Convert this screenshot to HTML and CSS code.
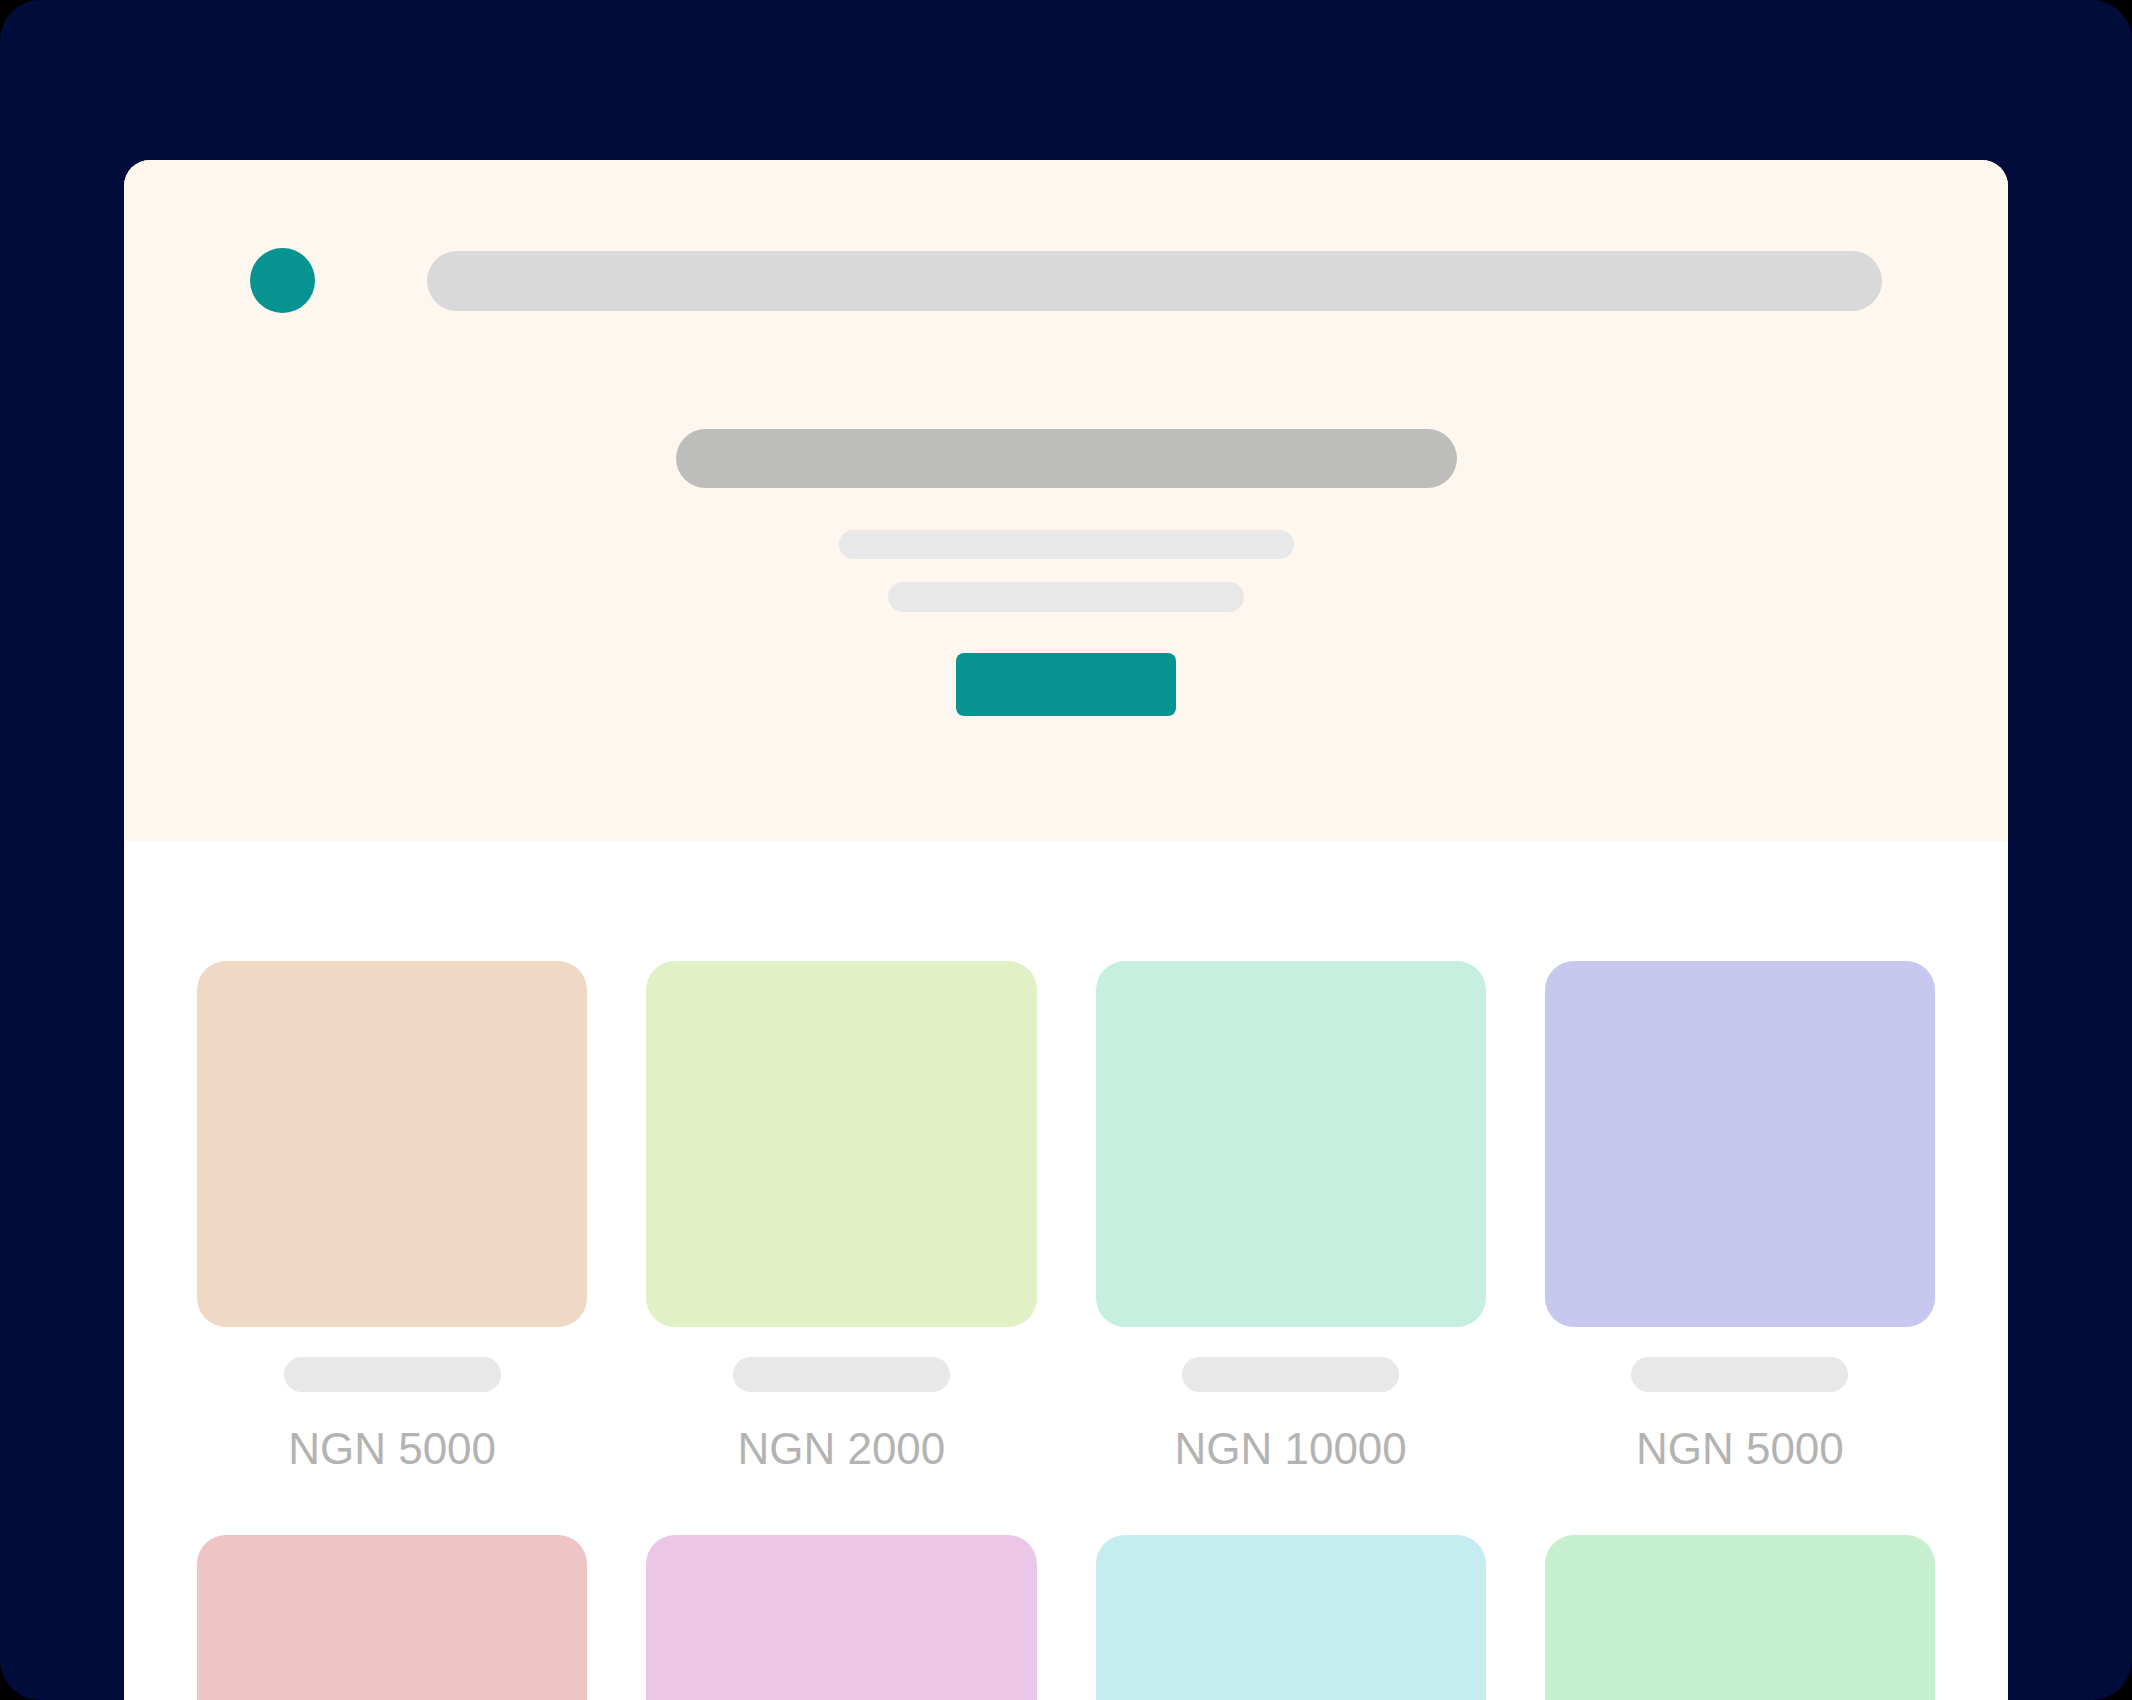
FILE: index.html
```html
<!DOCTYPE html>
<html lang="en">
<head>
<meta charset="utf-8">
<title>Store preview</title>
<link rel="stylesheet" href="styles.css">
</head>
<body>
<div class="frame">
  <div class="page">
    <header class="hero">
      <div class="topbar">
        <div class="logo"></div>
        <div class="search"></div>
      </div>
      <div class="hero-body">
        <div class="title"></div>
        <div class="line line-1"></div>
        <div class="line line-2"></div>
        <div class="cta"></div>
      </div>
    </header>
    <section class="products">
      <div class="product">
        <div class="thumb peach"></div>
        <div class="name"></div>
        <div class="price">NGN 5000</div>
      </div>
      <div class="product">
        <div class="thumb lime"></div>
        <div class="name"></div>
        <div class="price">NGN 2000</div>
      </div>
      <div class="product">
        <div class="thumb mint"></div>
        <div class="name"></div>
        <div class="price">NGN 10000</div>
      </div>
      <div class="product">
        <div class="thumb lavender"></div>
        <div class="name"></div>
        <div class="price">NGN 5000</div>
      </div>
      <div class="product">
        <div class="thumb rose"></div>
      </div>
      <div class="product">
        <div class="thumb orchid"></div>
      </div>
      <div class="product">
        <div class="thumb aqua"></div>
      </div>
      <div class="product">
        <div class="thumb green"></div>
      </div>
    </section>
  </div>
</div>
</body>
</html>
```

FILE: styles.css
```css
html, body {
  margin: 0;
  padding: 0;
  background: #000000;
}

body {
  width: 2132px;
  height: 1700px;
  overflow: hidden;
  font-family: "Liberation Sans", Arial, sans-serif;
}

.frame {
  width: 2132px;
  height: 1700px;
  box-sizing: border-box;
  background: #000c3a;
  border-radius: 40px;
  padding: 160px 124px 0 124px;
  overflow: hidden;
}

.page {
  height: 1540px;
  background: #ffffff;
  border-radius: 26px 26px 0 0;
  overflow: hidden;
}

.hero {
  background: #fdf7ef;
  height: 681px;
  box-sizing: border-box;
  padding: 88px 126px 0 126px;
}

.topbar {
  display: flex;
  align-items: center;
  gap: 112px;
}

.logo {
  width: 65px;
  height: 65px;
  border-radius: 50%;
  background: #079390;
  flex: none;
}

.search {
  flex: 1;
  height: 60px;
  border-radius: 30px;
  background: #d9d9d9;
}

.hero-body {
  display: flex;
  flex-direction: column;
  align-items: center;
  padding-top: 116px;
}

.title {
  width: 781px;
  height: 59px;
  border-radius: 30px;
  background: #bdbdbc;
}

.line {
  height: 29px;
  border-radius: 15px;
  background: #e8e8e8;
}

.line-1 {
  width: 455px;
  margin-top: 42px;
}

.line-2 {
  width: 356px;
  height: 30px;
  margin-top: 23px;
}

.cta {
  width: 220px;
  height: 63px;
  margin-top: 41px;
  border-radius: 8px;
  background: #079491;
}

.products {
  display: grid;
  grid-template-columns: repeat(4, 1fr);
  column-gap: 59px;
  row-gap: 64px;
  padding: 120px 73px 0 73px;
}

.product {
  display: flex;
  flex-direction: column;
  align-items: center;
}

.thumb {
  width: 100%;
  height: 366px;
  border-radius: 29px;
}

.peach { background: #efd9c5; }
.lime { background: #e1f0c5; }
.mint { background: #c6efdf; }
.lavender { background: #c8c7ed; }
.rose { background: #efc4c5; }
.orchid { background: #ecc6e6; }
.aqua { background: #c5edef; }
.green { background: #c6efcf; }

.name {
  width: 217px;
  height: 35px;
  margin-top: 30px;
  border-radius: 18px;
  background: #e8e8e8;
}

.price {
  margin-top: 35px;
  font-size: 44px;
  line-height: 44px;
  color: #b3b3b3;
  white-space: nowrap;
}
```
